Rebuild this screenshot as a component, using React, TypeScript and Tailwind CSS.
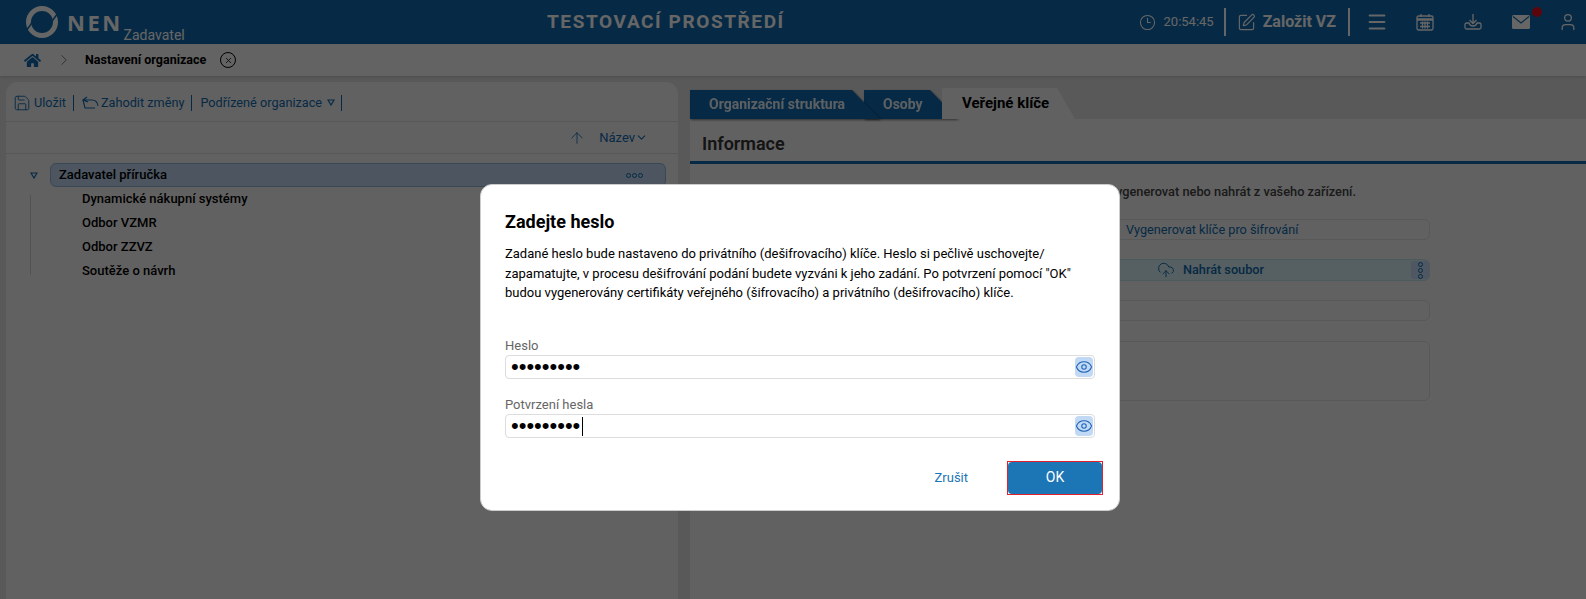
import { ChevronDown, Clock3, CloudUpload, Eye, Menu, Save, SquarePen, User, ArrowUp, ChevronRight, X } from "lucide-react";
import { FaHome } from "react-icons/fa";

const children = ["Dynamické nákupní systémy", "Odbor VZMR", "Odbor ZZVZ", "Soutěže o návrh"];

function Logo() {
  return (
    <svg width="34" height="34" viewBox="0 0 34 34" className="shrink-0">
      <circle cx="17" cy="17" r="13.500" fill="none" stroke="#fff" strokeWidth="5" />
      <path d="M1 25C6 22 7 13 15 9.500" fill="none" stroke="#0f69ad" strokeWidth="1.500" />
      <path d="M33 9C28 12 27 21 19 24.500" fill="none" stroke="#0f69ad" strokeWidth="1.500" />
    </svg>
  );
}

function Triangle() {
  return (
    <svg width="8" height="7" viewBox="0 0 8 7" fill="none" stroke="#0f69ad" strokeWidth="1.2">
      <path d="M1 1h6L4 6z" />
    </svg>
  );
}

function Dots({ vertical }: { vertical?: boolean }) {
  return (
    <span className={vertical ? "flex flex-col gap-[1px]" : "flex gap-[1px]"}>
      <span className="size-[5px] rounded-full border border-[#0f69ad]" />
      <span className="size-[5px] rounded-full border border-[#0f69ad]" />
      <span className="size-[5px] rounded-full border border-[#0f69ad]" />
    </span>
  );
}

function PasswordField({ label, caret }: { label: string; caret?: boolean }) {
  return (
    <div>
      <label className="block h-[19px] text-[13px] leading-[19px] text-[#666]">{label}</label>
      <div className="relative flex h-[24px] items-center rounded border border-[#ddd] bg-white pl-[5px] pr-[1px]">
        <input
          type="password"
          defaultValue="123456789"
          readOnly
          className="h-full min-w-0 flex-1 bg-transparent font-['Liberation_Sans',sans-serif] text-[22px] text-black outline-none"
        />
        {caret && <span className="absolute left-[76px] top-[2px] h-[19px] w-px bg-black" />}
        <span className="flex h-[20px] w-[18px] items-center justify-center rounded-sm bg-[#c2d9f5]">
          <Eye size={18} strokeWidth={1.4} className="text-[#1c62b5]" />
        </span>
      </div>
    </div>
  );
}

export default function App() {
  return (
    <div className="relative h-[599px] w-full overflow-hidden bg-[#dfdfdf] font-['Roboto',sans-serif] text-[13px] text-black">
      {/* Horní lišta */}
      <header className="flex h-[44px] items-center bg-[#0f69ad] pl-[25px] text-white">
        <Logo />
        <div className="ml-[8px] flex w-[480px] items-start">
          <span className="font-['Open_Sans',sans-serif] text-[22px] font-bold leading-[44px] tracking-[2.5px]">NEN</span>
          <span className="ml-[1px] mt-[26px] text-[14px] leading-[18px]">Zadavatel</span>
        </div>
        <div className="text-[19px] font-bold tracking-[1.6px]">TESTOVACÍ PROSTŘEDÍ</div>
        <div className="ml-auto flex items-center">
          <Clock3 size={17} strokeWidth={1.5} />
          <span className="ml-[8px] text-[13px]">20:54:45</span>
          <span className="ml-[10px] h-[28px] w-[2px] bg-white" />
          <SquarePen size={19} strokeWidth={1.5} className="ml-[11px]" />
          <span className="ml-[7px] text-[16px] font-bold">Založit VZ</span>
          <span className="ml-[12px] h-[28px] w-[2px] bg-white" />
          <Menu size={22} strokeWidth={2.25} className="ml-[16px]" />
          <svg width="18" height="18" viewBox="0 0 18 18" fill="none" stroke="currentColor" strokeWidth="1.3" className="ml-[28px]">
            <rect x="1" y="3" width="16" height="14" rx="1.5" />
            <path d="M1 6.500h16" strokeWidth="2.500" />
            <path d="M5 1v3M13 1v3M4 10h10M4 13.500h10M6.500 8.500v7M9 8.500v7M11.500 8.500v7" />
          </svg>
          <svg width="18" height="18" viewBox="0 0 18 18" fill="none" stroke="currentColor" strokeWidth="1.3" className="ml-[30px]">
            <path d="M9 1v9M5.500 7 9 10.500 12.500 7" />
            <path d="M5 10H2.500A1.500 1.500 0 0 0 1 11.500v3A1.500 1.500 0 0 0 2.500 16h13a1.500 1.500 0 0 0 1.500-1.500v-3A1.500 1.500 0 0 0 15.500 10H13c-.5 2-2 3-4 3s-3.500-1-4-3z" />
          </svg>
          <span className="relative ml-[30px]">
            <svg width="18" height="14" viewBox="0 0 18 14" className="block">
              <rect width="18" height="14" rx="1.500" fill="#fff" />
              <path d="M1 1.500 9 8l8-6.500" fill="none" stroke="#0f69ad" strokeWidth="1.2" />
            </svg>
            <span className="absolute -right-[12px] -top-[8px] size-[10px] rounded-full bg-[#e01020]" />
          </span>
          <User size={20} strokeWidth={1.5} className="ml-[28px] mr-[8px]" />
        </div>
      </header>

      {/* Drobečková navigace */}
      <div className="flex h-[32px] items-center bg-[#f8f8f8] pl-[24px] shadow-[0_1px_3px_rgba(0,0,0,0.15)]">
        <FaHome size={17} className="text-[#0f69ad]" />
        <ChevronRight size={18} strokeWidth={1} className="ml-[14px] text-[#555]" />
        <span className="ml-[12px] text-[12.500px] font-bold">Nastavení organizace</span>
        <span className="ml-[14px] flex size-[16px] items-center justify-center rounded-full border border-black">
          <X size={9} />
        </span>
      </div>

      <div className="flex h-[523px] pt-[6px]">
        {/* Levý panel */}
        <section className="ml-[6px] w-[672px] rounded-t-xl bg-[#f3f3f3]">
          <div className="flex h-[40px] items-center border-b border-[#ddd] pl-[7px] pt-[2px] text-[12.700px] text-[#0f69ad]">
            <Save size={18} strokeWidth={1.2} />
            <span className="ml-[3px]">Uložit</span>
            <span className="ml-[7px] h-[16px] w-px bg-[#0f69ad]" />
            <svg width="17" height="14" viewBox="0 0 17 14" fill="none" stroke="currentColor" strokeWidth="1.1" className="ml-[8px]">
              <path d="M1 4 3 12h10M5 1 1 4l5 2M1 4h9c3 0 5.500 2 6 6" />
            </svg>
            <span className="ml-[2px]">Zahodit změny</span>
            <span className="ml-[7px] h-[16px] w-px bg-[#0f69ad]" />
            <span className="ml-[8px]">Podřízené organizace</span>
            <span className="ml-[5px]"><Triangle /></span>
            <span className="ml-[6px] h-[16px] w-px bg-[#0f69ad]" />
          </div>
          <div className="flex h-[32px] items-center justify-end border-b border-[#ddd] pr-[30px] text-[#0f69ad]">
            <ArrowUp size={18} strokeWidth={1.1} />
            <span className="ml-[13px]">Název</span>
            <ChevronDown size={13} />
          </div>
          <div className="pl-[24px] pt-[9px]">
            <div className="flex items-center">
              <span className="flex w-[20px]"><Triangle /></span>
              <div className="flex h-[24px] w-[616px] items-center justify-between rounded-md border border-[#8fb2d9] bg-[#bdd4ef] pl-[8px] pr-[22px] font-medium">
                Zadavatel příručka
                <Dots />
              </div>
            </div>
            <ul className="relative pl-[52px] font-medium">
              <span className="absolute bottom-[8px] left-0 top-[8px] w-px bg-[#ccc]" />
              {children.map((c) => (
                <li key={c} className="flex h-[24px] items-center">{c}</li>
              ))}
            </ul>
          </div>
        </section>

        {/* Pravý panel */}
        <section className="ml-[12px] flex min-w-0 flex-1 flex-col pt-[6px]">
          <div className="flex h-[31px] items-end font-bold">
            <div className="relative z-20 drop-shadow-[1px_1px_1px_rgba(0,0,0,0.5)]">
              <div className="flex h-[29px] w-[190px] items-center bg-[#0f69ad] pl-[19px] text-[14px] text-white/90 [clip-path:polygon(0_0,162px_0,190px_100%,0_100%)]">Organizační struktura</div>
            </div>
            <div className="relative z-10 -ml-[16px] drop-shadow-[1px_1px_1px_rgba(0,0,0,0.5)]">
              <div className="flex h-[29px] w-[94px] items-center bg-[#0f69ad] pl-[19px] text-[14px] text-white/90 [clip-path:polygon(0_0,66px_0,94px_100%,0_100%)]">Osoby</div>
            </div>
            <div className="relative z-30 -ml-[16px] flex h-[31px] w-[133px] items-center bg-[#f3f3f3] pl-[20px] text-[15px] [clip-path:polygon(0_0,115px_0,133px_100%,0_100%)]">Veřejné klíče</div>
          </div>
          <div className="flex-1 bg-[#f3f3f3]">
            <h2 className="flex h-[45px] items-center border-b-[3px] border-[#0f69ad] pl-[12px] pt-[6px] text-[18px] font-semibold text-[#333]">Informace</h2>
            <div className="mr-[156px] pl-[16px] pt-[19px]">
              <p className="h-[18px] pr-[74px] text-right text-[12.800px] font-medium leading-[18px] text-[#444]">Klíče lze vygenerovat nebo nahrát z vašeho zařízení.</p>
              <div className="mt-[18px] flex h-[21px] items-center rounded-md border border-[#ddd] pl-[419px] text-[12.700px] text-[#0f69ad]">Vygenerovat klíče pro šifrování</div>
              <div className="mt-[19px] flex h-[22px] items-center gap-[8px] rounded-md border border-[#bfe0e6] bg-[#d6eef2] pl-[450px] text-[12.700px] font-medium text-[#0f69ad]">
                <CloudUpload size={18} strokeWidth={1.25} />
                Nahrát soubor
                <span className="ml-auto flex h-[18px] w-[18px] items-center justify-center rounded bg-[#c2d9f5]"><Dots vertical /></span>
              </div>
              <div className="mt-[19px] h-[21px] rounded-md border border-[#ddd]" />
              <div className="mt-[20px] h-[60px] rounded-md border border-[#ddd]" />
            </div>
          </div>
        </section>
      </div>

      {/* Překryv a dialog */}
      <div className="absolute inset-0 z-40 bg-black/60 pl-[480px] pt-[184px]">
        <div className="h-[327px] w-[640px] rounded-xl border border-[#ccc] bg-white pl-[24px] pr-[24px] pt-[25px]">
          <h3 className="text-[18px] font-bold leading-[24px]">Zadejte heslo</h3>
          <p className="mt-[10px] w-[590px] text-[13px] leading-[19.5px]">
            Zadané heslo bude nastaveno do privátního (dešifrovacího) klíče. Heslo si pečlivě uschovejte/ zapamatujte, v procesu dešifrování podání budete vyzváni k jeho zadání. Po potvrzení pomocí "OK" budou vygenerovány certifikáty veřejného (šifrovacího) a privátního (dešifrovacího) klíče.
          </p>
          <div className="mt-[33px] flex flex-col gap-[16px]">
            <PasswordField label="Heslo" />
            <PasswordField label="Potvrzení hesla" caret />
          </div>
          <div className="mt-[23px] flex items-center justify-end">
            <button className="text-[13px] text-[#1c75b5]">Zrušit</button>
            <button className="ml-[39px] -mr-[8px] h-[34px] w-[96px] border border-[#e0202a]">
              <span className="flex h-full items-center justify-center rounded-sm bg-[#1c75b5] text-[14px] text-white">OK</span>
            </button>
          </div>
        </div>
      </div>
    </div>
  );
}
